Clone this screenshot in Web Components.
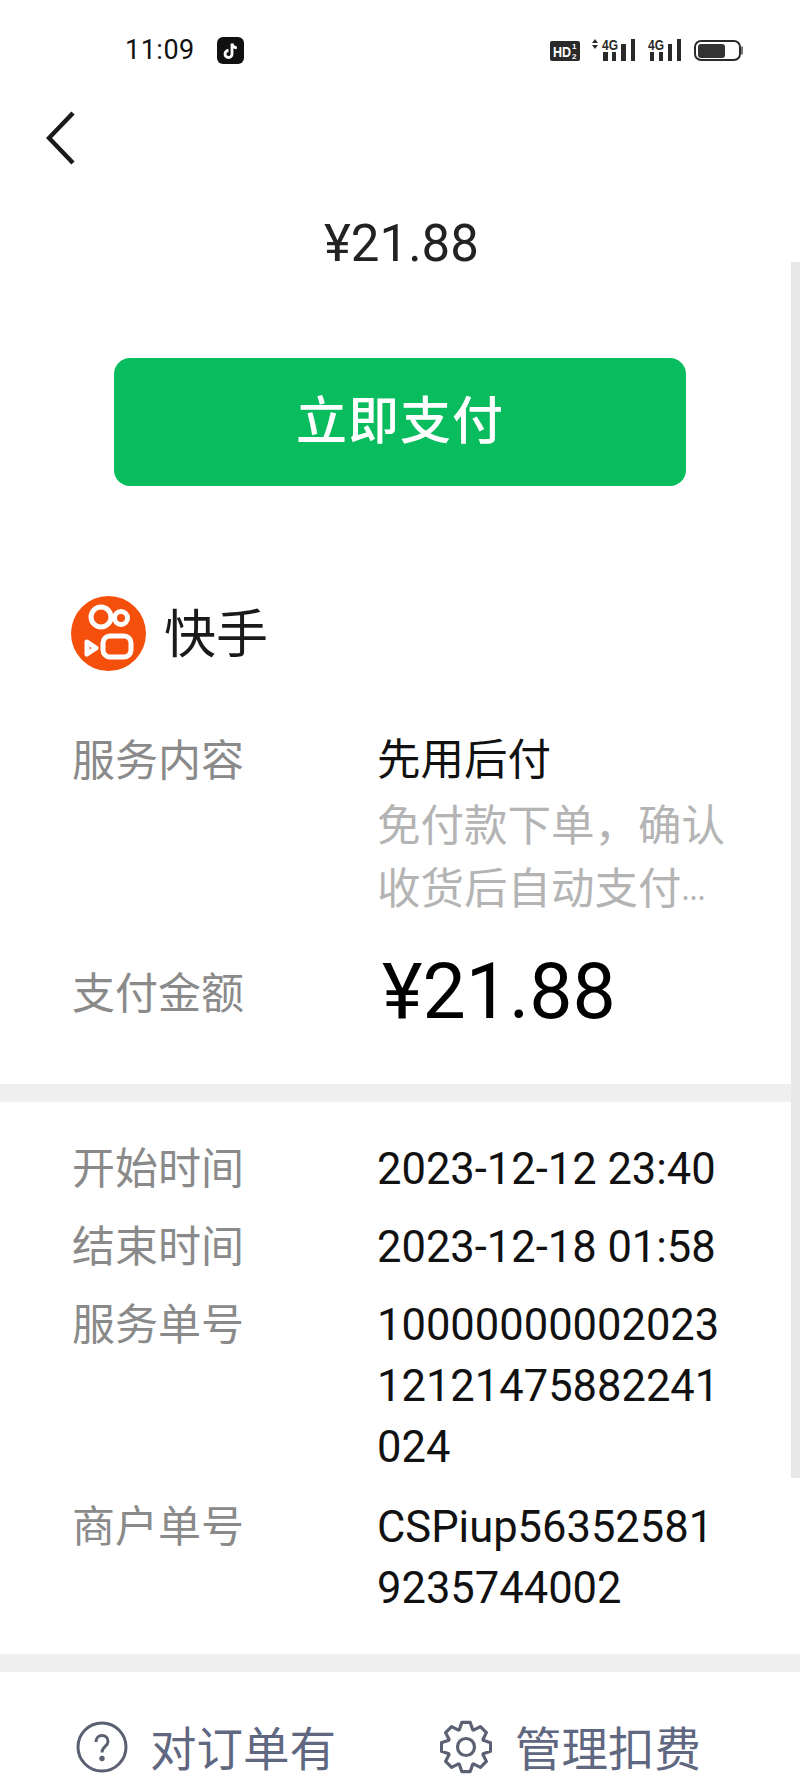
<!DOCTYPE html>
<html>
<head>
<meta charset="utf-8">
<style>
  html, body { margin: 0; background: #fff; }
  body { font-family: "Liberation Sans", "Noto Sans CJK SC", sans-serif; width: 800px; height: 1778px; overflow: hidden; position: relative; }
  .dots { font-size: 29px; vertical-align: 4px; }
</style>
</head>
<body>
<status-bar></status-bar>
<back-bar></back-bar>
<pay-head amount="¥21.88" label="立即支付"></pay-head>
<merchant-head name="快手"></merchant-head>
<section-block top="56.500">
  <info-row label="服务内容" cjk h="63">先用后付</info-row>
  <info-row muted h="151.500">免付款下单，确认<br>收货后自动支付<span class="dots">...</span></info-row>
  <info-row label="支付金额" big h="142">¥21.88</info-row>
</section-block>
<gray-bar></gray-bar>
<section-block top="34">
  <info-row label="开始时间" h="78">2023-12-12 23:40</info-row>
  <info-row label="结束时间" h="78">2023-12-18 01:58</info-row>
  <info-row label="服务单号" h="202">10000000002023<br>12121475882241<br>024</info-row>
  <info-row label="商户单号" h="160">CSPiup56352581<br>9235744002</info-row>
</section-block>
<gray-bar></gray-bar>
<foot-bar></foot-bar>
<scroll-thumb></scroll-thumb>
<script>
const define = (name, html, init) => {
  const t = document.createElement('template')
  t.innerHTML = html
  customElements.define(name, class extends HTMLElement {
    constructor() {
      super()
      this.attachShadow({mode: 'open'}).appendChild(t.content.cloneNode(true))
    }
    connectedCallback() {
      if (init) init(this, this.shadowRoot)
    }
  })
}

// 8 tooth gear outline, centre 26,27
const gear = () => {
  let d = ''
  for (let i = 0; i < 8; i++) {
    const a = i * Math.PI / 4 - Math.PI / 2
    const pts = [[-.37, 18.5], [-.17, 25], [.17, 25], [.37, 18.5]]
    pts.forEach(([o, r]) => {
      d += (d ? 'L' : 'M') + (26 + r * Math.cos(a + o)).toFixed(1) + ' ' + (27 + r * Math.sin(a + o)).toFixed(1)
    })
  }
  return d + 'Z'
}

define('status-bar', `<style>
    :host { display: flex; align-items: center; height: 100px; padding: 0 0 0 125px; box-sizing: border-box; color: #111; }
    .time { font: 27px "Roboto", sans-serif; letter-spacing: .5px; width: 92px; }
    .right { margin-left: auto; margin-right: 56px; }
    svg { display: block; }
    text { font-family: "Liberation Sans", sans-serif; font-weight: 700; }
  </style>
  <span class="time">11:09</span>
  <svg width="27" height="27" viewBox="0 0 27 27">
    <rect width="27" height="27" rx="6" fill="#111"/>
    <path d="M15 6.500v10.500a3.500 3.500 0 1 1-3.500-3.500M15 6.500c.4 2.600 2 4 4.800 4.300" fill="none" stroke="#fff" stroke-width="2.800"/>
  </svg>
  <svg class="right" width="194" height="26" viewBox="0 0 194 26">
    <rect x="0" y="4" width="30" height="20" rx="2" fill="#2a2a2a"/>
    <text x="3" y="20" font-size="15" textLength="18" lengthAdjust="spacingAndGlyphs" fill="#fff">HD</text>
    <text x="22" y="12" font-size="8" fill="#fff">1</text>
    <text x="22" y="22" font-size="8" fill="#fff">2</text>
    <path d="M42 6l3-4 3 4zM42 8l3 4 3-4z" fill="#2a2a2a"/>
    <text x="52" y="13" font-size="14" textLength="16" lengthAdjust="spacingAndGlyphs" fill="#2a2a2a">4G</text>
    <path d="M53 15h5v9h-5zM62 15h4v9h-4zM71 7h5v17h-5zM81 2h4v22h-4z" fill="#2a2a2a"/>
    <text x="98" y="13" font-size="14" textLength="16" lengthAdjust="spacingAndGlyphs" fill="#2a2a2a">4G</text>
    <path d="M100 15h4v9h-4zM109 15h4v9h-4zM118 7h4v17h-4zM127 2h4v22h-4z" fill="#2a2a2a"/>
    <rect x="145" y="4" width="45" height="19" rx="6" fill="none" stroke="#2a2a2a" stroke-width="2"/>
    <rect x="148" y="7" width="27" height="14" rx="3" fill="#333"/>
    <rect x="191" y="9.500" width="2" height="8" fill="#777"/>
  </svg>`)

define('back-bar', `<style>
    :host { display: block; box-sizing: border-box; height: 109px; padding: 10px 0 0 46px; }
    svg { display: block; }
  </style>
  <svg width="32" height="56" viewBox="0 0 32 56">
    <path d="M27 3 3 28l24 25" fill="none" stroke="#1a1a1a" stroke-width="4.500"/>
  </svg>`)

define('pay-head', `<style>
    :host { display: flex; flex-direction: column; align-items: center; }
    .amount { font: 51px "Roboto", sans-serif; color: #222; height: 70px; line-height: 70px; margin: 0 0 79px 3px; }
    .btn { width: 572px; height: 128px; border-radius: 16px; background: #09bc5e; color: #fff; text-align: center; font: 500 51px/119px "Noto Sans CJK SC", sans-serif; letter-spacing: 1px; }
  </style>
  <div class="amount"></div>
  <div class="btn"></div>`, (el, root) => {
    root.querySelector('.amount').textContent = el.getAttribute('amount')
    root.querySelector('.btn').textContent = el.getAttribute('label')
  })

define('merchant-head', `<style>
    :host { display: flex; align-items: center; gap: 18px; margin: 109px 0 0 71px; height: 76px; }
    span { font: 400 52px "Noto Sans CJK SC", sans-serif; color: #1a1a1a; padding-bottom: 6px; }
    svg { display: block; }
  </style>
  <svg width="75" height="75" viewBox="0 0 75 75">
    <circle cx="37.500" cy="37.500" r="37.500" fill="#f4500c"/>
    <g fill="none" stroke="#fff" stroke-width="5">
      <circle cx="30" cy="21" r="10"/>
      <circle cx="50" cy="22" r="6.500"/>
      <rect x="32" y="40" width="28" height="21" rx="7"/>
      <path d="M16 46l9 6-9 6z" stroke-linejoin="round"/>
    </g>
  </svg>
  <span></span>`, (el, root) => {
    root.querySelector('span').textContent = el.getAttribute('name')
  })

define('section-block', `<style>
    :host { display: block; padding: 0 0 0 72px; }
  </style><slot></slot>`, (el) => {
    if (el.hasAttribute('top')) el.style.paddingTop = el.getAttribute('top') + 'px'
  })

define('info-row', `<style>
    :host { display: grid; grid-template-columns: 305px 1fr; font: 400 43px/58px "Noto Sans CJK SC", sans-serif; }
    .label { color: #8a8a8a; }
    .value { color: #111; font-family: "Roboto", "Noto Sans CJK SC", sans-serif; font-size: 43.500px; line-height: 61px; padding-top: 3px; }
    :host([cjk]) .value { font-family: "Noto Sans CJK SC", sans-serif; padding-top: 0; line-height: 58px; }
    :host([muted]) .value { color: #b4b4b4; font-size: 43.500px; line-height: 63.500px; font-family: "Noto Sans CJK SC", sans-serif; padding-top: 0; }
    :host([big]) .label { line-height: 96px; }
    :host([big]) .value { font: 400 77px/100px "Roboto", sans-serif; color: #000; margin-left: 5px; padding-top: 0; }
  </style>
  <span class="label"></span>
  <span class="value"><slot></slot></span>`, (el, root) => {
    root.querySelector('.label').textContent = el.getAttribute('label') || ''
    el.style.height = el.getAttribute('h') + 'px'
  })

define('gray-bar', `<style>
    :host { display: block; height: 18px; background: #efefef; }
  </style>`)

define('foot-bar', `<style>
    :host { display: flex; align-items: center; height: 150px; padding-left: 76px; color: #5f6880; font: 400 46.500px "Noto Sans CJK SC", sans-serif; }
    span { display: block; padding-bottom: 4px; }
    svg { display: block; flex: none; }
  </style>
  <svg width="52" height="52" viewBox="0 0 52 52" fill="none" stroke="#5b6072" stroke-width="3">
    <circle cx="26" cy="26" r="24"/>
    <path d="M20 21c0-4 2.600-6.500 6-6.500s6 2.500 6 6c0 5-6 5-6 11"/>
    <circle cx="26" cy="37.500" r="1.200" fill="#5b6072"/>
  </svg>
  <span style="margin-left:22px;width:290px">对订单有</span>
  <svg width="52" height="54" viewBox="0 0 52 54" fill="none" stroke="#5b6072" stroke-width="3.200" stroke-linejoin="round">
    <circle cx="26" cy="27" r="8.500"/>
    <path class="gear"/>
  </svg>
  <span style="margin-left:23px">管理扣费</span>`, (el, root) => {
    root.querySelector('.gear').setAttribute('d', gear())
  })

define('scroll-thumb', `<style>
    :host { position: absolute; right: 0; top: 262px; width: 9px; height: 1216px; background: #e8e8e8; }
  </style>`)
</script>
</body>
</html>
